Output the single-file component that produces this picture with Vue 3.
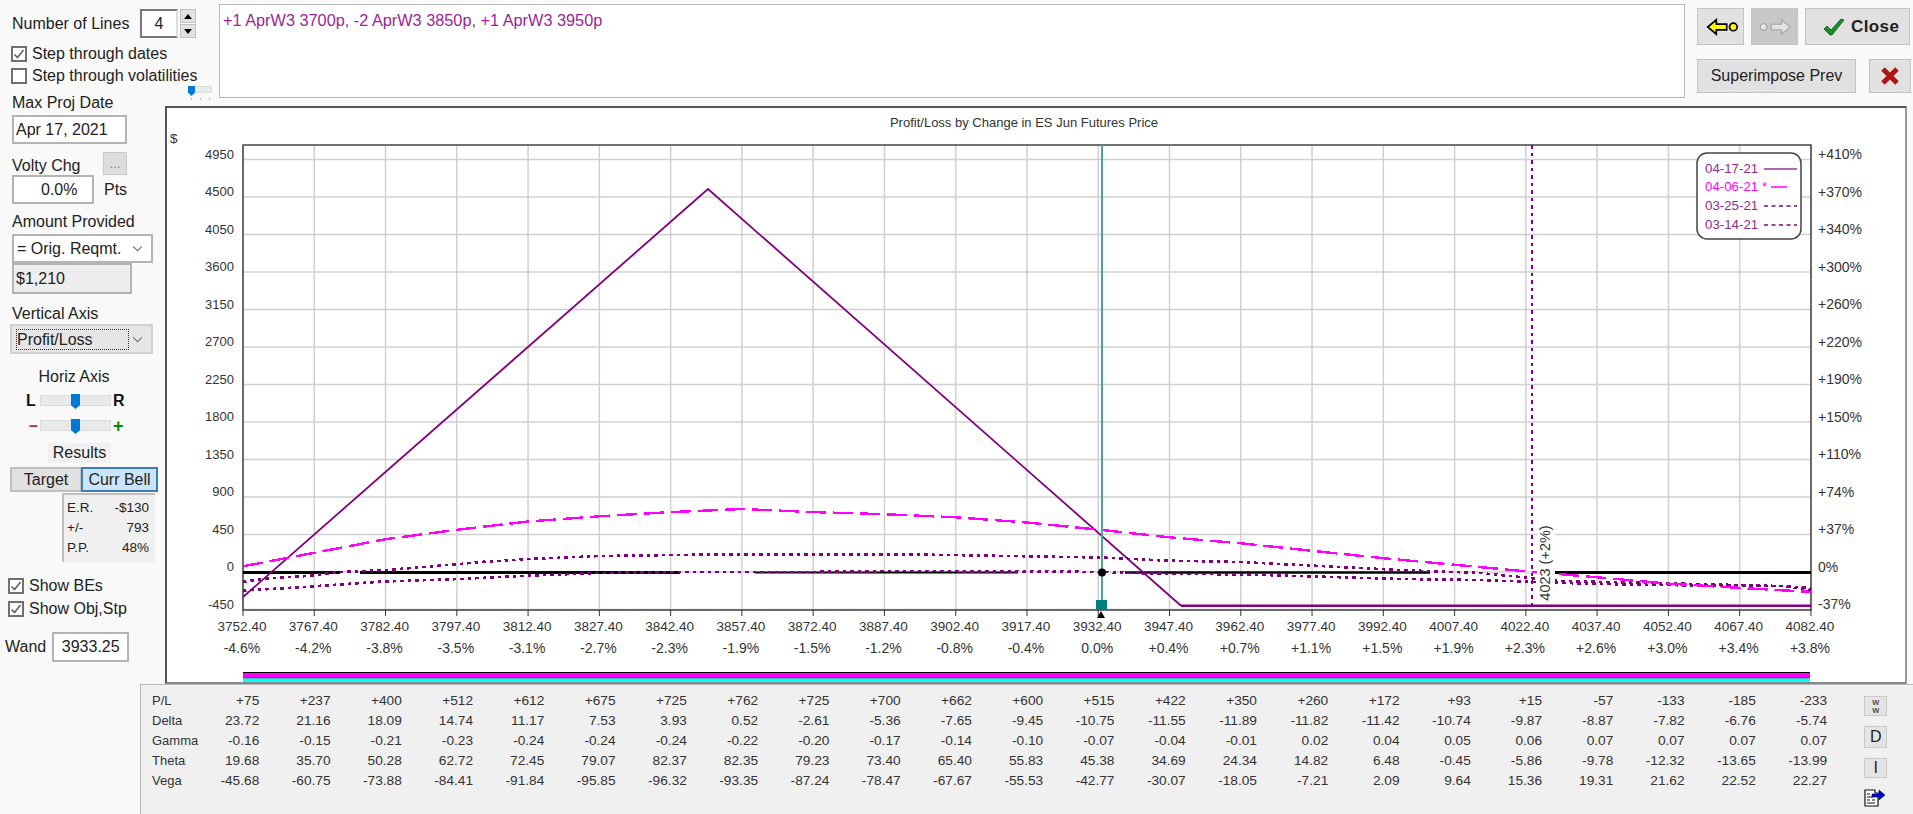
<script setup>
const tickCount = 23
const plot = { left: 243, right: 1811, top: 145, bottom: 610, step: 71.27 }

const priceLabels = Array.from({ length: tickCount }, (_, i) => (3752.4 + i * 15).toFixed(2))
const pctLabels = ['-4.6%', '-4.2%', '-3.8%', '-3.5%', '-3.1%', '-2.7%', '-2.3%', '-1.9%', '-1.5%', '-1.2%', '-0.8%', '-0.4%', '0.0%', '+0.4%', '+0.7%', '+1.1%', '+1.5%', '+1.9%', '+2.3%', '+2.6%', '+3.0%', '+3.4%', '+3.8%']
const dollarLabels = [4950, 4500, 4050, 3600, 3150, 2700, 2250, 1800, 1350, 900, 450, 0, -450]
const rightLabels = ['+410%', '+370%', '+340%', '+300%', '+260%', '+220%', '+190%', '+150%', '+110%', '+74%', '+37%', '0%', '-37%']

const tickX = i => plot.left + i * plot.step
const ticks = Array.from({ length: tickCount }, (_, i) => i)
const gridY = dollarLabels.map((_, i) => 159.5 + i * 37.5)

const rows = [
  { name: 'P/L', values: ['+75', '+237', '+400', '+512', '+612', '+675', '+725', '+762', '+725', '+700', '+662', '+600', '+515', '+422', '+350', '+260', '+172', '+93', '+15', '-57', '-133', '-185', '-233'] },
  { name: 'Delta', values: ['23.72', '21.16', '18.09', '14.74', '11.17', '7.53', '3.93', '0.52', '-2.61', '-5.36', '-7.65', '-9.45', '-10.75', '-11.55', '-11.89', '-11.82', '-11.42', '-10.74', '-9.87', '-8.87', '-7.82', '-6.76', '-5.74'] },
  { name: 'Gamma', values: ['-0.16', '-0.15', '-0.21', '-0.23', '-0.24', '-0.24', '-0.24', '-0.22', '-0.20', '-0.17', '-0.14', '-0.10', '-0.07', '-0.04', '-0.01', '0.02', '0.04', '0.05', '0.06', '0.07', '0.07', '0.07', '0.07'] },
  { name: 'Theta', values: ['19.68', '35.70', '50.28', '62.72', '72.45', '79.07', '82.37', '82.35', '79.23', '73.40', '65.40', '55.83', '45.38', '34.69', '24.34', '14.82', '6.48', '-0.45', '-5.86', '-9.78', '-12.32', '-13.65', '-13.99'] },
  { name: 'Vega', values: ['-45.68', '-60.75', '-73.88', '-84.41', '-91.84', '-95.85', '-96.32', '-93.35', '-87.24', '-78.47', '-67.67', '-55.53', '-42.77', '-30.07', '-18.05', '-7.21', '2.09', '9.64', '15.36', '19.31', '21.62', '22.52', '22.27'] }
]

// magenta line is just the P/L row on the dollar axis
const magentaLine = rows[0].values
  .map((v, i) => `${tickX(i).toFixed(1)},${(572.5 - Number(v) / 12).toFixed(1)}`)
  .join(' ')

const expiryLine = '243,597 708,189 1181,605.7'
const upperDotted = '243,581.7 273,578 307,576 340,572 387,570 427,566.7 460,564 480,562 530,559 600,556 700,554.7 900,554.4 950,555 1100,557.5 1169,560.7 1240,562 1400,570 1480,573 1530,578 1563,581 1650,583 1780,586 1811,590'
const lowerDotted = '243,590.7 303,587 380,581.7 460,579 480,578 530,575.6 600,573 680,572 800,572 900,571 1040,571.5 1102,572 1169,574 1240,574.3 1400,579 1480,580 1563,583 1650,585 1780,586 1811,588'

const zeroSegments = [
  { from: 243, to: 340, width: 3 },
  { from: 360, to: 680, width: 3 },
  { from: 755, to: 1018, width: 2 },
  { from: 1125, to: 1430, width: 2.5 },
  { from: 1555, to: 1811, width: 3 }
]

const legend = [
  { date: '04-17-21', y: 168, cls: 'leg-purple' },
  { date: '04-06-21 *', y: 186, cls: 'leg-magenta' },
  { date: '03-25-21', y: 205, cls: 'leg-purple' },
  { date: '03-14-21', y: 224, cls: 'leg-purple' }
]
</script>

<template>
  <div class="page">
    <div class="upper">
      <aside class="left">
        <div class="lines-row">
          <span class="lines-label">Number of Lines</span>
          <div class="field lines-field">4</div>
          <div class="spin">
            <button class="spin-btn"><span class="arrow-up"></span></button>
            <button class="spin-btn"><span class="arrow-down"></span></button>
          </div>
        </div>
        <label class="check first-check"><span class="box"><svg viewBox="0 0 12 12"><path d="M1.5 6.5 4.5 9.5 10.5 2" /></svg></span>Step through dates</label>
        <label class="check second-check"><span class="box"></span>Step through volatilities</label>

        <div class="caption cap-max">Max Proj Date</div>
        <div class="field date-field">Apr 17, 2021</div>

        <div class="volty-head">
          <span class="caption">Volty Chg</span>
          <button class="dots-btn">...</button>
        </div>
        <div class="volty-row">
          <div class="field volty-field">0.0%</div>
          <span>Pts</span>
        </div>

        <div class="caption cap-amount">Amount Provided</div>
        <div class="field select-field">
          <span>= Orig. Reqmt.</span>
          <svg class="chevron" viewBox="0 0 12 8"><path d="M1 1.5 6 6.5 11 1.5" /></svg>
        </div>
        <div class="field money-field">$1,210</div>

        <div class="caption cap-vert">Vertical Axis</div>
        <div class="field select-field axis-select">
          <span class="focus-text">Profit/Loss</span>
          <svg class="chevron" viewBox="0 0 12 8"><path d="M1 1.5 6 6.5 11 1.5" /></svg>
        </div>

        <div class="caption cap-horiz">Horiz Axis</div>
        <div class="slider-row row-lr">
          <span class="end-l">L</span>
          <div class="track"><span class="thumb"></span></div>
          <span class="end-r">R</span>
        </div>
        <div class="slider-row row-pm">
          <span class="end-minus">–</span>
          <div class="track"><span class="thumb"></span></div>
          <span class="end-plus">+</span>
        </div>

        <div class="results-title">Results</div>
        <div class="results-tabs">
          <button class="tab">Target</button>
          <button class="tab tab-on">Curr Bell</button>
        </div>
        <div class="results-box">
          <div><span>E.R.</span><span>-$130</span></div>
          <div><span>+/-</span><span>793</span></div>
          <div><span>P.P.</span><span>48%</span></div>
        </div>

        <label class="check be-check"><span class="box"><svg viewBox="0 0 12 12"><path d="M1.5 6.5 4.5 9.5 10.5 2" /></svg></span>Show BEs</label>
        <label class="check obj-check"><span class="box"><svg viewBox="0 0 12 12"><path d="M1.5 6.5 4.5 9.5 10.5 2" /></svg></span>Show Obj,Stp</label>

        <div class="wand-row">
          <span>Wand</span>
          <div class="field wand-field">3933.25</div>
        </div>
      </aside>

      <main class="main">
        <div class="topbar">
          <div class="gutter">
            <div class="mini-track"><span class="mini-thumb"></span></div>
            <div class="mini-ticks"><i></i><i></i><i></i></div>
          </div>
          <div class="trade-box">+1 AprW3 3700p, -2 AprW3 3850p, +1 AprW3 3950p</div>
          <div class="actions">
            <div class="action-row">
              <button class="btn nav-btn">
                <svg viewBox="0 0 47 37"><path class="arrow-yellow" d="M9 19 18 11.5V16H29V22H18V26.5Z" /><circle class="arrow-yellow" cx="36" cy="19" r="4" /></svg>
              </button>
              <button class="btn nav-btn nav-off">
                <svg viewBox="0 0 47 37"><circle class="arrow-off" cx="11" cy="19" r="3.5" /><path class="arrow-off" d="M39 19 30 11.5V16H19V22H30V26.5Z" /></svg>
              </button>
              <button class="btn close-btn">
                <svg viewBox="0 0 22 18"><path class="check-green" d="M1 11 4 8 8 12 18 1 21 2 9 17 7 17Z" /></svg>
                Close
              </button>
            </div>
            <div class="action-row second">
              <button class="btn superimpose">Superimpose Prev</button>
              <button class="btn x-btn">
                <svg viewBox="0 0 18 18"><path class="x-red" d="M2 2 16 16M16 2 2 16" /></svg>
              </button>
            </div>
          </div>
        </div>

        <div class="chart-frame">
          <svg class="chart" viewBox="167 108 1738 574">
            <text class="lbl title" x="1024" y="127">Profit/Loss by Change in ES Jun Futures Price</text>
            <text class="lbl" x="170" y="143">$</text>

            <!-- grid -->
            <line v-for="y in gridY" :key="'h' + y" class="grid" :x1="plot.left" :x2="plot.right" :y1="y" :y2="y" />
            <line v-for="i in ticks" :key="'v' + i" class="grid" :x1="tickX(i)" :x2="tickX(i)" :y1="plot.top" :y2="plot.bottom" />
            <rect class="plot-box" :x="plot.left" :y="plot.top" :width="plot.right - plot.left" :height="plot.bottom - plot.top" />
            <line v-for="i in ticks" :key="'t' + i" class="tick" :x1="tickX(i)" :x2="tickX(i)" :y1="plot.bottom" :y2="plot.bottom + 6" />

            <!-- axis labels -->
            <text v-for="(v, i) in dollarLabels" :key="'d' + i" class="lbl dollar" x="234" :y="158.5 + i * 37.5">{{ v }}</text>
            <text v-for="(v, i) in rightLabels" :key="'r' + i" class="lbl pct" x="1818" :y="159 + i * 37.5">{{ v }}</text>
            <text v-for="i in ticks" :key="'p' + i" class="lbl mid" :x="tickX(i) - 1" y="631">{{ priceLabels[i] }}</text>
            <text v-for="i in ticks" :key="'c' + i" class="lbl mid pct" :x="tickX(i) - 1" y="653">{{ pctLabels[i] }}</text>

            <!-- zero line -->
            <line v-for="s in zeroSegments" :key="s.from" class="zero" :x1="s.from" :x2="s.to" y1="572.5" y2="572.5" :stroke-width="s.width" />

            <!-- curves -->
            <polyline class="curve solid" :points="expiryLine" />
            <line class="flat" x1="1181" x2="1811" y1="605.7" y2="605.7" />
            <polyline class="curve dotted" :points="upperDotted" />
            <polyline class="curve dotted" :points="lowerDotted" />
            <polyline class="curve dashed" :points="magentaLine" />

            <!-- break even marker -->
            <line class="curve dotted" x1="1532" x2="1532" y1="145" y2="607" />
            <rect class="mask" x="1537" y="525" width="18" height="78" />
            <text class="lbl mid be-label" transform="rotate(-90 1550 563)" x="1550" y="563">4023 (+2%)</text>

            <!-- wand -->
            <line class="wand" x1="1102" x2="1102" y1="145" y2="602" />
            <circle cx="1102" cy="572.5" r="4" />
            <rect class="wand-sq" x="1096" y="600" width="11" height="10" />
            <path d="M1101 611 1105 618H1097Z" />

            <!-- legend -->
            <rect class="legend" x="1697" y="153" width="104" height="86" rx="10" />
            <text v-for="l in legend" :key="l.date" class="lbl leg-text" :class="l.cls" x="1705" :y="l.y + 5">{{ l.date }}</text>
            <line class="leg-solid" x1="1764" x2="1797" y1="169" y2="169" />
            <line class="leg-dash" x1="1771" x2="1795" y1="187" y2="187" />
            <line class="leg-dots" x1="1764" x2="1797" y1="206" y2="206" />
            <line class="leg-dots" x1="1764" x2="1797" y1="225" y2="225" />

            <!-- colour bars under the chart -->
            <rect x="243" y="672" width="1567" height="1" />
            <rect x="243" y="673" width="1567" height="4.5" fill="#ff00ff" />
            <rect x="243" y="677.5" width="1567" height="1" />
            <rect x="243" y="678.5" width="1567" height="3.5" fill="#00ffff" />
          </svg>
        </div>
      </main>
    </div>

    <div class="lower">
      <div class="table-panel">
        <div class="greeks">
          <template v-for="r in rows" :key="r.name">
            <span class="greek-name">{{ r.name }}</span>
            <span v-for="(v, i) in r.values" :key="i" class="greek-val">{{ v }}</span>
          </template>
        </div>
        <div class="side-tools">
          <button class="btn tool tool-w">w<br />w</button>
          <button class="btn tool tool-d">D</button>
          <button class="btn tool tool-i">I</button>
          <svg class="export" viewBox="0 0 22 19">
            <path class="doc" d="M1 2H11V5H14V18H1Z" />
            <path class="doc-rows" d="M3 6H6M3 9H9M3 12H6M8 12H11M3 15H11" />
            <path class="doc-arrow" d="M8 6H15V2L21 7 15 12V9H8Z" />
          </svg>
        </div>
      </div>
    </div>
  </div>
</template>

<style>
html, body {
  margin: 0;
  background: #f9f9f9;
}
</style>

<style scoped>
.page {
  width: 1913px;
  height: 814px;
  overflow: hidden;
  background: #f9f9f9;
  color: #222;
  font-family: "Liberation Sans", Arial, sans-serif;
  font-size: 16px;
  line-height: 18px;
}
button {
  font: inherit;
  color: inherit;
  padding: 0;
}
.upper {
  display: flex;
  height: 684px;
}

/* left column */
.left {
  width: 165px;
  flex: none;
  padding-top: 9px;
  box-sizing: border-box;
  white-space: nowrap;
}
.field {
  box-sizing: border-box;
  background: #fff;
  border: 2px solid #b4b4b4;
  display: flex;
  align-items: center;
}
.lines-row {
  display: flex;
  align-items: center;
  height: 29px;
  padding-left: 12px;
}
.lines-label {
  width: 128px;
  flex: none;
}
.lines-field {
  width: 38px;
  height: 29px;
  flex: none;
  justify-content: center;
  border-color: #777 #ddd #777 #777;
}
.spin {
  display: flex;
  flex: none;
  flex-direction: column;
  gap: 1px;
  margin-left: 2px;
}
.spin-btn {
  width: 16px;
  height: 14px;
  background: #e1e1e1;
  border: 1px solid #c0c0c0;
  display: flex;
  align-items: center;
  justify-content: center;
}
.arrow-up {
  border: 4px solid transparent;
  border-top: 0;
  border-bottom: 5px solid #000;
}
.arrow-down {
  border: 4px solid transparent;
  border-bottom: 0;
  border-top: 5px solid #000;
}
.check {
  display: flex;
  align-items: center;
  height: 16px;
  gap: 5px;
  padding-left: 11px;
}
.first-check {
  margin-top: 8px;
}
.second-check {
  margin-top: 6px;
}
.be-check {
  margin-top: 16px;
  padding-left: 8px;
}
.obj-check {
  margin-top: 7px;
  padding-left: 8px;
}
.box {
  box-sizing: border-box;
  width: 16px;
  height: 16px;
  border: 2px solid #707070;
  background: #fff;
  flex: none;
}
.box svg {
  display: block;
  width: 12px;
  height: 12px;
}
.box path {
  fill: none;
  stroke: #606060;
  stroke-width: 1.6;
}
.caption {
  padding-left: 12px;
}
.cap-max {
  margin-top: 10px;
}
.date-field {
  margin: 3px 0 0 12px;
  width: 115px;
  height: 29px;
  padding-left: 2px;
}
.volty-head {
  display: flex;
  justify-content: space-between;
  align-items: flex-end;
  margin-top: 9px;
  width: 127px;
  height: 22px;
}
.dots-btn {
  width: 24px;
  height: 23px;
  background: #ddd;
  border: 1px solid #c8c8c8;
  color: #888;
  font-size: 13px;
}
.volty-row {
  display: flex;
  align-items: center;
  gap: 10px;
  padding-left: 12px;
}
.volty-field {
  width: 82px;
  height: 29px;
  padding-left: 27px;
}
.cap-amount {
  margin-top: 9px;
}
.select-field {
  margin: 3px 0 0 12px;
  width: 141px;
  height: 29px;
  padding: 0 8px 0 3px;
  justify-content: space-between;
}
.chevron {
  width: 11px;
  height: 7px;
}
.chevron path {
  fill: none;
  stroke: #777;
  stroke-width: 1.4;
}
.money-field {
  margin-left: 12px;
  width: 120px;
  height: 31px;
  padding-left: 2px;
  background: #eee;
}
.cap-vert {
  margin-top: 11px;
}
.axis-select {
  margin: 1px 0 0 10px;
  width: 143px;
  height: 30px;
  background: #e6e6e6;
  border-color: #d0d0d0;
}
.focus-text {
  border: 1px dotted #333;
  width: 113px;
  height: 21px;
  line-height: 20px;
  box-sizing: border-box;
  margin-left: 1px;
}
.cap-horiz {
  margin-top: 14px;
  padding-left: 0;
  width: 148px;
  text-align: center;
}
.slider-row {
  display: flex;
  align-items: center;
  height: 15px;
  padding-left: 26px;
}
.row-lr {
  margin-top: 7px;
}
.row-pm {
  margin-top: 10px;
}
.end-l,
.end-r {
  width: 14px;
  font-weight: bold;
  color: #111;
}
.end-r {
  margin-left: 2px;
}
.end-minus {
  width: 14px;
  padding-left: 3px;
  box-sizing: border-box;
  color: #a33;
  font-weight: bold;
}
.end-plus {
  margin-left: 2px;
  color: #0a840a;
  font-weight: bold;
  font-size: 18px;
}
.track {
  position: relative;
  width: 71px;
  height: 11px;
  box-sizing: border-box;
  background: #e7eaea;
  border: 1px solid #dcdcdc;
}
.thumb {
  position: absolute;
  left: 30px;
  top: -2px;
  width: 9px;
  height: 15px;
  background: #0078d7;
  clip-path: polygon(0 0, 100% 0, 100% 75%, 50% 100%, 0 75%);
}
.results-title {
  margin: 10px 0 0 48px;
  width: 63px;
  height: 20px;
  line-height: 20px;
  text-align: center;
  background: #f0f0f0;
}
.results-tabs {
  display: flex;
  margin: 4px 0 0 10px;
  height: 25px;
}
.tab {
  width: 72px;
  background: #e1e1e1;
  border: 2px solid #c0c0c0;
  white-space: nowrap;
}
.tab-on {
  width: 77px;
  margin-left: -1px;
  background: #cce4f7;
  border-color: #3f7fb5;
}
.results-box {
  box-sizing: border-box;
  margin: 1px 0 0 62px;
  width: 93px;
  height: 69px;
  padding: 3px 6px 0 3px;
  background: #f0f0f0;
  border-top: 2px solid #c0c0c0;
  border-left: 2px solid #c0c0c0;
  font-size: 13.5px;
}
.results-box div {
  display: flex;
  justify-content: space-between;
  height: 20px;
  line-height: 20px;
}
.wand-row {
  display: flex;
  align-items: center;
  gap: 6px;
  margin-top: 15px;
  padding-left: 5px;
}
.wand-field {
  width: 77px;
  height: 30px;
  justify-content: center;
}

/* top bar */
.main {
  flex: 1;
  min-width: 0;
}
.topbar {
  display: flex;
  height: 106px;
}
.gutter {
  width: 54px;
  flex: none;
  padding: 86px 0 0 23px;
  box-sizing: border-box;
}
.mini-track {
  position: relative;
  width: 24px;
  height: 7px;
  background: #e7eaea;
  border: 1px solid #dcdcdc;
  box-sizing: border-box;
}
.mini-thumb {
  position: absolute;
  left: -1px;
  top: -1px;
  width: 7px;
  height: 10px;
  background: #0078d7;
  clip-path: polygon(0 0, 100% 0, 100% 65%, 50% 100%, 0 65%);
}
.mini-ticks {
  display: flex;
  justify-content: space-between;
  width: 19px;
  margin: 5px 0 0 3px;
}
.mini-ticks i {
  width: 1px;
  height: 2px;
  background: #bbb;
}
.trade-box {
  box-sizing: border-box;
  width: 1466px;
  height: 94px;
  margin-top: 4px;
  padding: 6px 0 0 3px;
  background: #fff;
  border: 1px solid #b8b8b8;
  color: #9b1f96;
  font-size: 16.3px;
}
.actions {
  margin-left: 12px;
  padding-top: 8px;
}
.action-row {
  display: flex;
  gap: 7px;
  height: 37px;
}
.action-row.second {
  margin-top: 14px;
  height: 34px;
  gap: 13px;
}
.btn {
  box-sizing: border-box;
  background: #e1e1e1;
  border: 1px solid #c4c4c4;
}
.nav-btn {
  width: 47px;
}
.nav-btn svg {
  display: block;
  width: 47px;
  height: 35px;
}
.nav-off {
  background: #c8c8c8;
}
.arrow-yellow {
  fill: #ff0;
  stroke: #000;
  stroke-width: 1.8;
}
.arrow-off {
  fill: #e4e4e4;
  stroke: #aaa;
  stroke-width: 1.4;
}
.close-btn {
  width: 105px;
  margin-left: 0;
  font-size: 17px;
  font-weight: bold;
  letter-spacing: 0.4px;
  display: flex;
  align-items: center;
  gap: 6px;
  padding-left: 17px;
}
.close-btn svg {
  width: 22px;
  height: 18px;
}
.check-green {
  fill: #16921c;
  stroke: #0d3a3a;
  stroke-width: 0.7;
}
.superimpose {
  width: 159px;
}
.x-btn {
  width: 42px;
  display: flex;
  align-items: center;
  justify-content: center;
}
.x-btn svg {
  width: 18px;
  height: 18px;
}
.x-red {
  fill: none;
  stroke: #b01414;
  stroke-width: 5;
}

/* chart */
.chart-frame {
  box-sizing: border-box;
  width: 1742px;
  height: 578px;
  background: #fff;
  border: 2px solid #555;
  border-right-color: #999;
  border-bottom-color: #888;
}
.chart {
  display: block;
  width: 1738px;
  height: 574px;
}
.lbl {
  font-family: "Liberation Sans", Arial, sans-serif;
  font-size: 13.5px;
  fill: #333;
}
.title {
  text-anchor: middle;
  font-size: 13px;
}
.dollar {
  text-anchor: end;
  font-size: 13px;
}
.pct {
  font-size: 14px;
}
.mid {
  text-anchor: middle;
}
.be-label {
  font-size: 14.5px;
}
.grid {
  stroke: #d0d0d0;
  stroke-width: 1.5;
}
.plot-box {
  fill: none;
  stroke: #444;
  stroke-width: 1.5;
}
.tick {
  stroke: #333;
  stroke-width: 1;
}
.zero {
  stroke: #000;
}
.curve {
  fill: none;
}
.solid {
  stroke: #800080;
  stroke-width: 1.8;
}
.flat {
  stroke: #800080;
  stroke-width: 2.6;
}
.dotted {
  stroke: #800080;
  stroke-width: 2.6;
  stroke-dasharray: 3.5 4;
  shape-rendering: crispEdges;
}
.dashed {
  stroke: #ff00ff;
  stroke-width: 2.4;
  stroke-dasharray: 20 7;
  shape-rendering: crispEdges;
}
.mask {
  fill: #fff;
}
.wand {
  stroke: #4aa3a3;
  stroke-width: 2;
}
.wand-sq {
  fill: #008080;
}
.legend {
  fill: #fff;
  stroke: #444;
  stroke-width: 1.5;
}
.leg-text {
  font-size: 13.3px;
}
.leg-purple {
  fill: #8f2a8f;
}
.leg-magenta {
  fill: #ff00ff;
}
.leg-solid {
  stroke: #993399;
  stroke-width: 1.5;
}
.leg-dash {
  stroke: #ff00ff;
  stroke-width: 1.5;
  stroke-dasharray: 16 8 2 10;
}
.leg-dots {
  stroke: #800080;
  stroke-width: 1.4;
  stroke-dasharray: 4 3.5;
}

/* bottom table */
.lower {
  padding-left: 140px;
}
.table-panel {
  display: flex;
  height: 130px;
  background: #f0f0f0;
  border-top: 1px solid #b8b8b8;
  border-left: 1px solid #b8b8b8;
  box-sizing: border-box;
}
.greeks {
  display: grid;
  grid-template-columns: 36px repeat(23, 71.27px);
  grid-auto-rows: 20px;
  flex: none;
  width: 1675.2px;
  padding: 6px 0 0 11px;
  font-size: 13.7px;
  line-height: 20px;
  color: #333;
}
.greek-name {
  font-size: 13px;
}
.greek-val {
  text-align: right;
}
.side-tools {
  display: flex;
  flex-direction: column;
  align-items: flex-start;
  padding: 11px 0 0 37px;
}
.tool {
  width: 23px;
  background: #e4e4e4;
  border: 1px solid #c8c8c8;
}
.tool-w {
  height: 20px;
  font-size: 9px;
  line-height: 8px;
  font-weight: bold;
  color: #555;
}
.tool-d {
  height: 22px;
  margin-top: 10px;
  line-height: 20px;
}
.tool-i {
  height: 20px;
  margin-top: 10px;
  line-height: 18px;
}
.export {
  width: 22px;
  height: 19px;
  margin-top: 10px;
}
.doc {
  fill: #fff;
  stroke: #111;
  stroke-width: 1.2;
}
.doc-rows {
  fill: none;
  stroke: #111;
  stroke-width: 1.2;
}
.doc-arrow {
  fill: #0000d0;
  stroke: #000080;
  stroke-width: 0.6;
}
</style>
